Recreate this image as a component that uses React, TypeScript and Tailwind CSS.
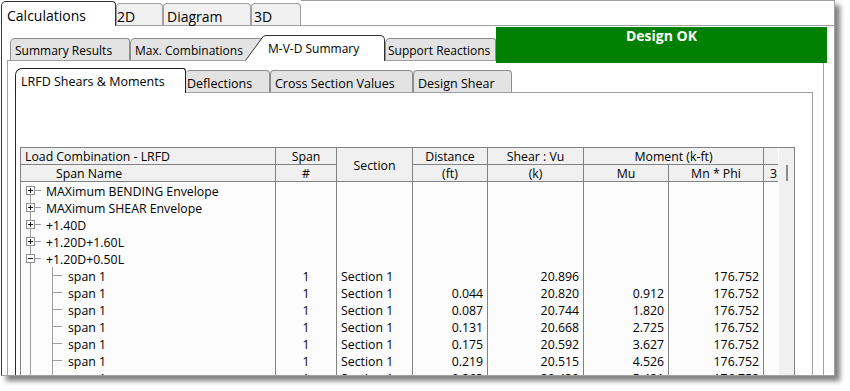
import React from 'react';

// Colours sampled from the reference
const TREE = '#a0a0a0';

type TopRow = { label: string; open: boolean };
type DataRow = { dist: string; shear: string; mu: string; mn: string };

const tops: TopRow[] = [
  { label: 'MAXimum BENDING Envelope', open: false },
  { label: 'MAXimum SHEAR Envelope', open: false },
  { label: '+1.40D', open: false },
  { label: '+1.20D+1.60L', open: false },
  { label: '+1.20D+0.50L', open: true },
];

const rows: DataRow[] = [
  { dist: '', shear: '20.896', mu: '', mn: '176.752' },
  { dist: '0.044', shear: '20.820', mu: '0.912', mn: '176.752' },
  { dist: '0.087', shear: '20.744', mu: '1.820', mn: '176.752' },
  { dist: '0.131', shear: '20.668', mu: '2.725', mn: '176.752' },
  { dist: '0.175', shear: '20.592', mu: '3.627', mn: '176.752' },
  { dist: '0.219', shear: '20.515', mu: '4.526', mn: '176.752' },
  { dist: '0.263', shear: '20.439', mu: '5.421', mn: '176.752' },
];

// expander box + connector lines for a top level node
function TopLines({ open, above }: { open: boolean; above: boolean }) {
  return (
    <svg width="25" height="17" className="shrink-0">
      {above && <line x1="9.5" y1="0" x2="9.5" y2="4" stroke={TREE} />}
      <line x1="9.5" y1="13" x2="9.5" y2="17" stroke={TREE} />
      <line x1="14" y1="8.5" x2="20" y2="8.5" stroke={TREE} />
      <rect x="5.5" y="4.5" width="8" height="8" fill="#fff" stroke="#8f8f8f" />
      <line x1="7" y1="8.5" x2="12" y2="8.5" stroke="#1a1a1a" />
      {!open && <line x1="9.5" y1="6" x2="9.5" y2="11" stroke="#1a1a1a" />}
    </svg>
  );
}

function ChildLines() {
  return (
    <svg width="47" height="17" className="shrink-0">
      <line x1="9.5" y1="0" x2="9.5" y2="17" stroke={TREE} />
      <line x1="31.5" y1="0" x2="31.5" y2="17" stroke={TREE} />
      <line x1="32" y1="8.5" x2="41" y2="8.5" stroke={TREE} />
    </svg>
  );
}

function Grid() {
  return (
    <div className="flex w-[775px] shrink-0 border-t border-[#828282]">
      <div className="grid w-[759px] grid-cols-[255px_61px_76px_75px_96px_85px_95px_14px] border-l border-[#828282] bg-[#fcfcfc] text-[12.3px] text-black">
        {/* header row 1 */}
        <div className="h-[17px] border-b border-r border-[#828282] bg-[#f0f0f0] pl-[4px] leading-[18px]">Load Combination - LRFD</div>
        <div className="h-[17px] border-b border-r border-[#828282] bg-[#f0f0f0] text-center leading-[18px]">Span</div>
        <div className="row-span-2 flex h-[34px] items-center justify-center border-b border-r border-[#828282] bg-[#f0f0f0] pt-[2px] leading-[16px]">Section</div>
        <div className="h-[17px] border-b border-r border-[#828282] bg-[#f0f0f0] text-center leading-[18px]">Distance</div>
        <div className="h-[17px] border-b border-r border-[#828282] bg-[#f0f0f0] text-center leading-[18px]">Shear : Vu</div>
        <div className="col-span-2 h-[17px] border-b border-r border-[#828282] bg-[#f0f0f0] text-center leading-[18px]">Moment (k-ft)</div>
        <div className="h-[17px] border-b border-[#828282] bg-[#f0f0f0]" />
        {/* header row 2 */}
        <div className="h-[17px] border-b border-r border-[#828282] bg-[#f0f0f0] pl-[35px] leading-[18px]">Span Name</div>
        <div className="h-[17px] border-b border-r border-[#828282] bg-[#f0f0f0] text-center leading-[18px]">#</div>
        <div className="h-[17px] border-b border-r border-[#828282] bg-[#f0f0f0] text-center leading-[18px]">(ft)</div>
        <div className="h-[17px] border-b border-r border-[#828282] bg-[#f0f0f0] text-center leading-[18px]">(k)</div>
        <div className="h-[17px] border-b border-r border-[#828282] bg-[#f0f0f0] text-center leading-[18px]">Mu</div>
        <div className="h-[17px] border-b border-r border-[#828282] bg-[#f0f0f0] text-center leading-[18px]">Mn * Phi</div>
        <div className="h-[17px] overflow-hidden border-b border-[#828282] bg-[#f0f0f0] pl-[6px] leading-[18px]">3</div>

        {tops.map((t, i) => (
          <React.Fragment key={t.label}>
            <div className="flex h-[17px] items-start border-r border-[#828282]">
              <TopLines open={t.open} above={i > 0} />
              <span className="whitespace-nowrap leading-[19px]">{t.label}</span>
            </div>
            <div className="h-[17px] border-r border-[#828282]" />
            <div className="h-[17px] border-r border-[#828282]" />
            <div className="h-[17px] border-r border-[#828282]" />
            <div className="h-[17px] border-r border-[#828282]" />
            <div className="h-[17px] border-r border-[#828282]" />
            <div className="h-[17px] border-r border-[#828282]" />
            <div className="h-[17px]" />
          </React.Fragment>
        ))}

        {rows.map((r, i) => (
          <React.Fragment key={i}>
            <div className="flex h-[17px] items-start border-r border-[#828282]">
              <ChildLines />
              <span className="leading-[19px]">span 1</span>
            </div>
            <div className="h-[17px] border-r border-[#828282] text-center leading-[19px]">1</div>
            <div className="h-[17px] border-r border-[#828282] pl-[4px] leading-[19px]">Section 1</div>
            <div className="h-[17px] border-r border-[#828282] pr-[4px] text-right leading-[19px]">{r.dist}</div>
            <div className="h-[17px] border-r border-[#828282] pr-[4px] text-right leading-[19px]">{r.shear}</div>
            <div className="h-[17px] border-r border-[#828282] pr-[4px] text-right leading-[19px]">{r.mu}</div>
            <div className="h-[17px] border-r border-[#828282] pr-[4px] text-right leading-[19px]">{r.mn}</div>
            <div className="h-[17px]" />
          </React.Fragment>
        ))}
      </div>
      {/* collapsed vertical scrollbar */}
      <div className="w-[16px] shrink-0 border-r border-[#828282] bg-[#f0f0f0] pl-[7px] pt-[17px]">
        <div className="h-[16px] w-[2px] bg-[#8a8a8a]" />
      </div>
    </div>
  );
}

export default function App() {
  return (
    <div className="h-[391px] w-[850px] overflow-hidden bg-white pl-px font-['Open_Sans',sans-serif] text-black">
      <div className="flex h-[376px] w-[834px] flex-col border-r border-[#a0a0a0] bg-white shadow-[5px_5px_5px_rgba(0,0,0,0.5)]">
        {/* top level tabs */}
        <div className="flex h-[26px] shrink-0 items-end border-b border-[#a0a0a0]">
          <div className="relative z-10 -mb-px h-[25px] w-[115px] shrink-0 rounded-tl-[5px] rounded-tr-[4px] border border-b-0 border-[#333] bg-white pl-[5px] pt-[5px] text-[14px] leading-[18px]">Calculations</div>
          <div className="h-[22px] w-[47px] shrink-0 rounded-t-[4px] border border-b-0 border-[#a0a0a0] bg-[#f0f0f0] pl-0 pt-[4px] text-[14px] leading-[18px]">2D</div>
          <div className="h-[22px] w-[88px] shrink-0 rounded-t-[4px] border border-b-0 border-[#a0a0a0] bg-[#f0f0f0] pl-[3px] pt-[4px] text-[14px] leading-[18px]">Diagram</div>
          <div className="h-[22px] w-[50px] shrink-0 rounded-t-[4px] border border-b-0 border-[#a0a0a0] bg-[#f0f0f0] pl-[2px] pt-[4px] text-[14px] leading-[18px]">3D</div>
          <div className="h-full flex-1 border-t border-[#a0a0a0]" />
        </div>

        <div className="flex min-h-0 flex-1 flex-col border-b border-l border-[#a0a0a0] border-l-[#3a3a3a]">
          <div className="ml-[5px] flex min-h-0 w-[817px] flex-1 flex-col">
            {/* second level tabs */}
            <div className="flex h-[35px] shrink-0 items-end border-b border-[#a0a0a0] pl-[3px] text-[12px] leading-[16px]">
              <div className="h-[22px] w-[120px] shrink-0 rounded-tl-[5px] rounded-tr-[3px] border border-b-0 border-[#8d8d8d] bg-[#e3e3e3] pl-[4px] pt-[4px]">Summary Results</div>
              <div className="h-[22px] w-[133px] shrink-0 rounded-tl-[5px] rounded-tr-[3px] border border-b-0 border-[#8d8d8d] bg-[#e3e3e3] pl-[4px] pt-[4px]">Max. Combinations</div>
              <div className="relative z-10 -mb-px h-[26px] w-[122px] shrink-0 rounded-tl-[3px] rounded-tr-[5px] border border-b-0 border-l-0 border-[#333] bg-white pl-[5px] pt-[5px]">
                <svg width="19" height="26" className="absolute -left-[18px] -top-px">
                  <polygon points="19,1 19,26 0,26" fill="#fff" />
                  <line x1="0.5" y1="25.5" x2="18.5" y2="1" stroke="#333" />
                </svg>
                M-V-D Summary
              </div>
              <div className="h-[22px] w-[111px] shrink-0 whitespace-nowrap rounded-tl-[5px] rounded-tr-[3px] border border-b-0 border-[#8d8d8d] bg-[#e3e3e3] pl-[2px] pt-[4px]">Support Reactions</div>
              <div className="relative z-20 -mb-[2px] mt-px h-[36px] w-[331px] shrink-0 self-start bg-[#008000] pt-[2px] text-center text-[14px] font-bold leading-[14px] text-white">Design OK</div>
            </div>

            <div className="flex min-h-0 flex-1 flex-col border-x border-[#a0a0a0] pl-[7px]">
              <div className="flex min-h-0 w-[798px] flex-1 flex-col">
                {/* third level tabs */}
                <div className="flex h-[32px] shrink-0 items-end border-b border-[#a0a0a0] text-[12.5px] leading-[16px]">
                  <div className="relative z-10 -mb-px h-[25px] w-[171px] shrink-0 rounded-tl-[7px] rounded-tr-[3px] border border-b-0 border-[#222] bg-white pl-[5px] pt-[5px]">LRFD Shears &amp; Moments</div>
                  <div className="h-[22px] w-[84px] shrink-0 rounded-t-[4px] border border-b-0 border-l-0 border-[#8d8d8d] bg-[#e3e3e3] pl-px pt-[5px]">Deflections</div>
                  <div className="h-[22px] w-[143px] shrink-0 rounded-t-[4px] border border-b-0 border-[#8d8d8d] bg-[#e3e3e3] pl-[4px] pt-[5px]">Cross Section Values</div>
                  <div className="h-[22px] w-[99px] shrink-0 rounded-t-[4px] border border-b-0 border-[#8d8d8d] bg-[#e3e3e3] pl-[4px] pt-[5px]">Design Shear</div>
                </div>

                <div className="min-h-0 flex-1 overflow-hidden border-x border-[#a0a0a0] border-l-[#2a2a2a] pl-[4px] pt-[54px]">
                  <Grid />
                </div>
              </div>
            </div>
          </div>
        </div>
      </div>
    </div>
  );
}
